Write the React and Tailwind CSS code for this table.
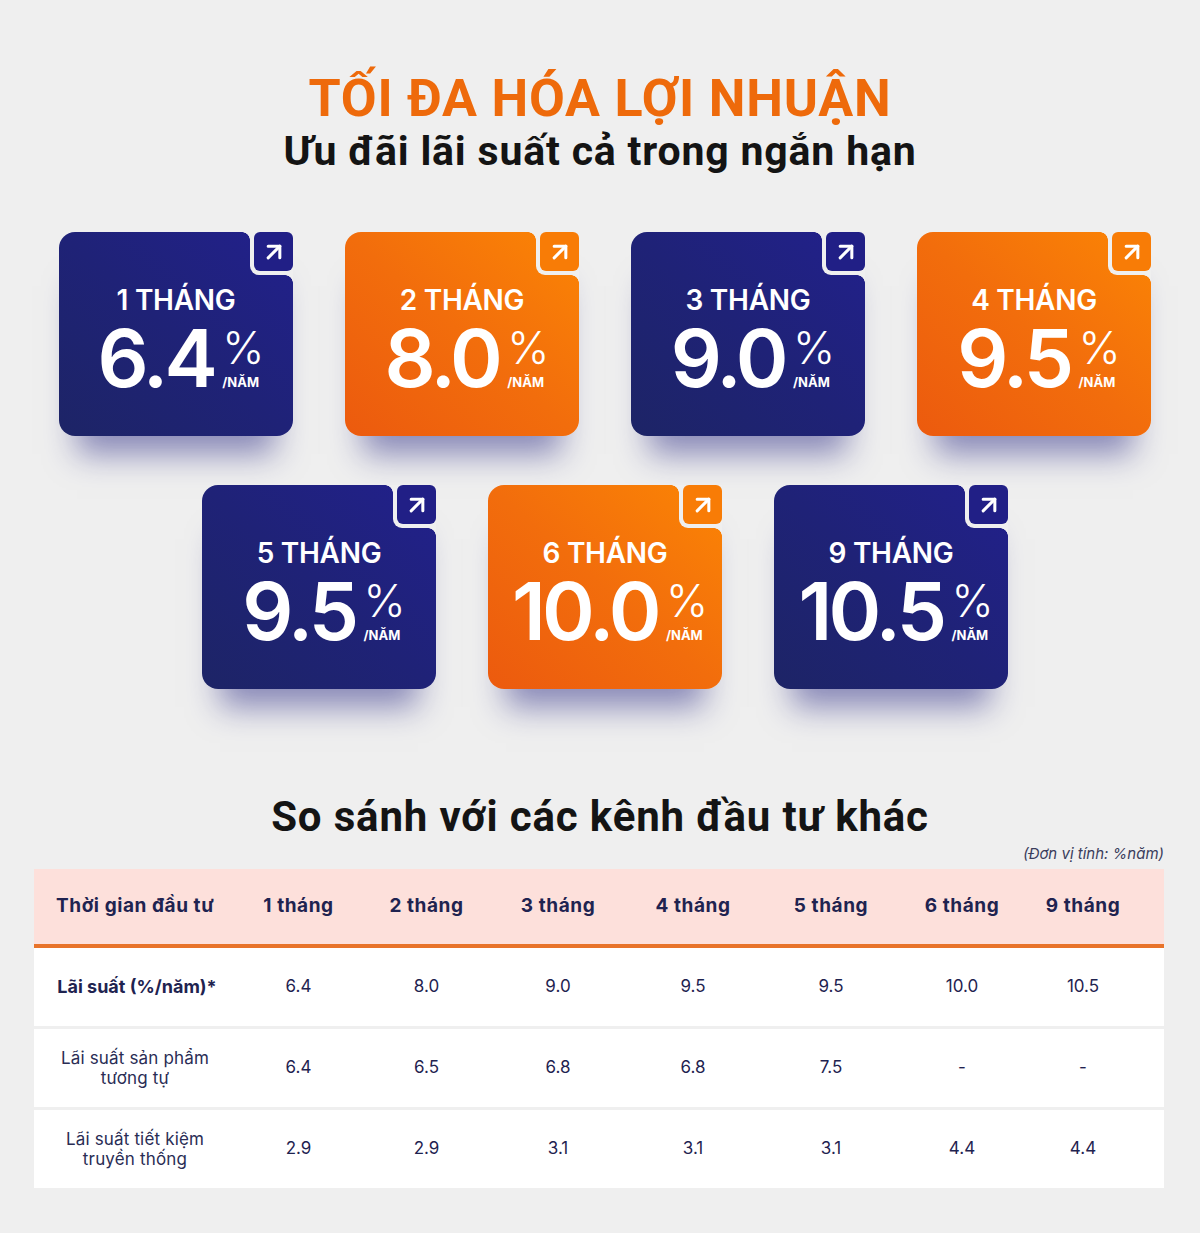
import React from "react";
import { ArrowUpRight } from "lucide-react";

const rates = [
  { months: 1, rate: "6.4", tone: "navy" },
  { months: 2, rate: "8.0", tone: "orange" },
  { months: 3, rate: "9.0", tone: "navy" },
  { months: 4, rate: "9.5", tone: "orange" },
  { months: 5, rate: "9.5", tone: "navy" },
  { months: 6, rate: "10.0", tone: "orange" },
  { months: 9, rate: "10.5", tone: "navy" },
];

const tones = {
  navy: "bg-gradient-to-tr from-[#1d2466] via-[#1f2277] to-[#22208c]",
  orange: "bg-gradient-to-tr from-[#ec5a0e] via-[#f26d0c] to-[#fb8504]",
};

const boxTone = {
  navy: "bg-[#211f86]",
  orange: "bg-[#f87c06]",
};

const RateCard = ({ item }) => (
  <div
    className={`relative w-[234px] h-[204px] rounded-2xl ${tones[item.tone]} shadow-[0_36px_30px_-18px_rgba(36,36,130,0.5)]`}
  >
    {/* notch cut out of the top-right corner */}
    <div className="absolute top-0 right-0 w-[43px] h-[43px] bg-[#efefef] rounded-bl-[9px]">
      <div
        className={`absolute top-0 right-0 w-[39px] h-[39px] rounded-[6px] ${boxTone[item.tone]} flex items-center justify-center`}
      >
        <ArrowUpRight className="w-7 h-7 text-white" strokeWidth={2.6} />
      </div>
    </div>
    <div className="absolute top-0 right-[43px] w-[8px] h-[8px] bg-[radial-gradient(circle_at_0_100%,transparent_7.5px,#efefef_8px)]" />
    <div className="absolute top-[43px] right-0 w-[8px] h-[8px] bg-[radial-gradient(circle_at_0_100%,transparent_7.5px,#efefef_8px)]" />

    <div className="flex flex-col items-center pt-[52px] text-white font-['Inter',sans-serif]">
      <div className="text-[28px] leading-[32px] font-semibold tracking-[-0.01em]">
        {item.months} THÁNG
      </div>
      <div className="flex items-start mt-[2px] ml-[10px]">
        <span className="text-[80px] leading-[80px] font-semibold tracking-[-0.045em]">{item.rate}</span>
        <div className="flex flex-col items-start ml-[8px] mt-[12px]">
          <span className="text-[45px] leading-[36px] font-light">%</span>
          <span className="text-[13px] leading-[13px] font-bold mt-[10px]">/NĂM</span>
        </div>
      </div>
    </div>
  </div>
);

const cols = ["1 tháng", "2 tháng", "3 tháng", "4 tháng", "5 tháng", "6 tháng", "9 tháng"];

const rows = [
  { label: "Lãi suất (%/năm)*", bold: true, values: ["6.4", "8.0", "9.0", "9.5", "9.5", "10.0", "10.5"] },
  { label: "Lãi suất sản phẩm\ntương tự", values: ["6.4", "6.5", "6.8", "6.8", "7.5", "-", "-"] },
  { label: "Lãi suất tiết kiệm\ntruyền thống", values: ["2.9", "2.9", "3.1", "3.1", "3.1", "4.4", "4.4"] },
];

const gridCols = "grid grid-cols-[202px_125px_131px_132px_138px_138px_124px_140px]";

const App = () => {
  return (
    <div className="min-h-[1233px] w-full bg-[#efefef] font-['Inter',sans-serif]">
      <div className="pt-[70px] text-center font-['Roboto',sans-serif]">
        <h1 className="text-[52px] leading-[58px] font-bold text-[#ee6a0b] tracking-[0.015em]">
          TỐI ĐA HÓA LỢI NHUẬN
        </h1>
        <h2 className="text-[41px] leading-[50px] font-bold text-[#141414] tracking-[0.02em] mt-[-2px]">
          Ưu đãi lãi suất cả trong ngắn hạn
        </h2>
      </div>

      <div className="flex flex-col items-center gap-[49px] mt-[56px] pl-[10px]">
        <div className="flex gap-[52px]">
          {rates.slice(0, 4).map((r) => (
            <RateCard key={r.months} item={r} />
          ))}
        </div>
        <div className="flex gap-[52px]">
          {rates.slice(4).map((r) => (
            <RateCard key={r.months} item={r} />
          ))}
        </div>
      </div>

      <h2 className="mt-[103px] text-center text-[42px] leading-[50px] font-bold text-[#141414] tracking-[0.02em] font-['Roboto',sans-serif]">
        So sánh với các kênh đầu tư khác
      </h2>

      <div className="ml-[34px] mr-[36px] mt-[2px]">
        <div className="text-right text-[15px] leading-[20px] italic text-[#3a3d5c]">(Đơn vị tính: %năm)</div>
        <div className="mt-[5px] text-[#1f2350]">
          <div
            className={`${gridCols} h-[79px] items-center bg-[#fde0db] border-b-[4px] border-[#e8732a] text-[19px] font-bold tracking-[0.03em]`}
          >
            <div className="pl-[22px] whitespace-nowrap">Thời gian đầu tư</div>
            {cols.map((c, i) => (
              <div key={c} className={`text-center ${i === 6 ? "pr-[22px]" : ""}`}>
                {c}
              </div>
            ))}
          </div>
          <div className="flex flex-col gap-[3px]">
            {rows.map((row) => (
              <div key={row.label} className={`${gridCols} h-[78px] items-center bg-white text-[17px]`}>
                <div
                  className={`text-center whitespace-pre-line leading-[20px] ${row.bold ? "font-bold text-[18px] pl-[4px] whitespace-nowrap" : "text-[#2a2d55] tracking-[0.01em]"}`}
                >
                  {row.label}
                </div>
                {row.values.map((v, i) => (
                  <div key={i} className={`text-center ${i === 6 ? "pr-[22px]" : ""}`}>
                    {v}
                  </div>
                ))}
              </div>
            ))}
          </div>
        </div>
      </div>
    </div>
  );
};

export default App;
